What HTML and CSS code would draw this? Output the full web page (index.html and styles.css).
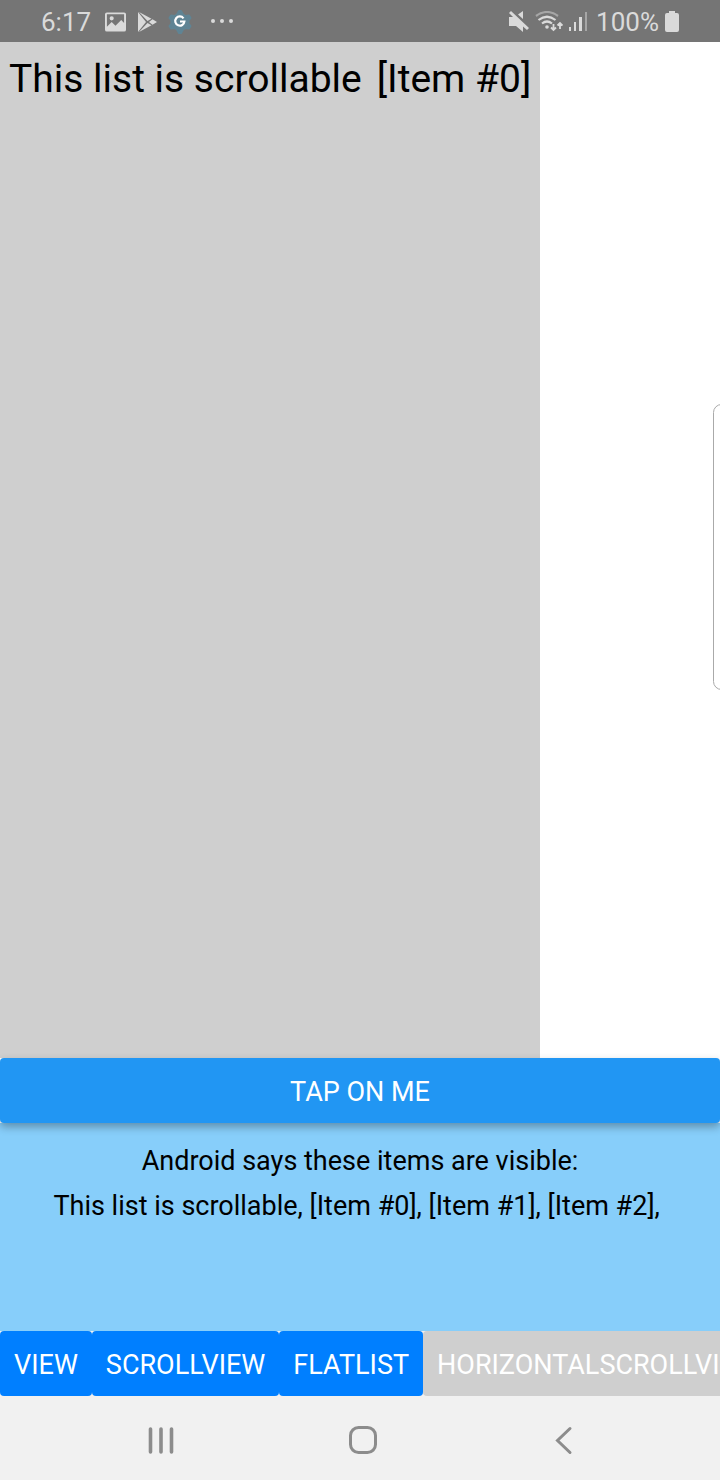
FILE: index.html
```html
<!DOCTYPE html>
<html lang="en">
<head>
<meta charset="utf-8">
<meta name="viewport" content="width=device-width, initial-scale=1">
<title>Scrollable list</title>
<link rel="stylesheet" href="styles.css">
</head>
<body>
<div class="screen">
  <header class="status">
    <div class="status-left">
      <span class="clock">6:17</span>
      <svg class="icon" width="21" height="20" viewBox="0 0 22 20"><path fill-rule="evenodd" fill="#dadada" d="M2 0h18q2 0 2 2v16q0 2-2 2H2q-2 0-2-2V2Q0 0 2 0zM2 2v13l5-5 4 4 6-6 3 3V2zM7 4a2.200 2.200 0 1 1 0 4.400a2.200 2.200 0 1 1 0-4.400z"/></svg>
      <svg class="icon" width="20" height="20" viewBox="0 0 20 20"><path fill="#dadada" d="M1 0v20L9 10zM2 0L14.500 6.800 10.500 9zM2 20L14.500 13.200 10.500 11zM15.500 7.200l4.500 2.800-4.500 2.800L12 10z"/></svg>
      <svg class="icon" width="24" height="26" viewBox="0 0 24 26"><path fill="#5f8494" stroke="#5f8494" stroke-width="2" stroke-linejoin="round" d="M11 2h2l2 3.500 2.500 1.500 3.500-.5 1.500 2.500-2 2.500v3l2 2.500-1.500 2.500-3.500-.5-2.500 1.500-2 3.500h-2l-2-3.500-2.500-1.500-3.500.5-1.500-2.500 2-2.500v-3l-2-2.500 1.500-2.500 3.500.5 2.500-1.500z"/><path fill="none" stroke="#fff" stroke-width="2.200" d="M15.500 9.300A4.600 4.600 0 1 0 16.400 12.500H12"/></svg>
      <svg class="icon dots" width="24" height="20" viewBox="0 0 24 20"><g fill="#dadada"><circle cx="3" cy="9" r="2"/><circle cx="12" cy="9" r="2"/><circle cx="21" cy="9" r="2"/></g></svg>
    </div>
    <div class="status-right">
      <svg class="icon" width="20" height="22" viewBox="0 0 20 22"><path fill="#dadada" d="M2 0L20 17 18 19 14 15.500V21L7 15H0V6h4L0 2zM14 0v8L9 3.500z"/></svg>
      <svg class="icon" width="28" height="22" viewBox="0 0 28 22"><g fill="none" stroke="#dadada" stroke-width="2.200"><path stroke="#a6a6a6" d="M1 5q11-8 22 0"/><path d="M3.500 9q8.500-6.500 17 0M7 12.500q5-4 10 0"/></g><circle cx="12" cy="16" r="1.800" fill="#dadada"/><path fill="none" stroke="#dadada" stroke-width="1.800" d="M18.500 13v6M16 16.500l2.500 2.500 2.500-2.500M25 18v-6M22.500 14.500L25 12l2.500 2.500"/></svg>
      <svg class="icon" width="19" height="22" viewBox="0 0 19 22"><g fill="#dadada"><path d="M0 16h2v4H0zM5 11h2v9H5zM10 6h3v14h-3z"/><path fill="#a6a6a6" d="M16 1h2v19h-2z"/></g></svg>
      <span class="battery-text">100%</span>
      <svg class="icon" width="14" height="22" viewBox="0 0 14 22"><path fill="#dadada" d="M4 0h6v2h2q2 0 2 2v15q0 2-2 2H2q-2 0-2-2V4q0-2 2-2h2z"/></svg>
    </div>
  </header>

  <main class="list">
    <div class="list-item"><span>This list is scrollable</span><span>[Item #0]</span></div>
  </main>

  <button class="tap" type="button">TAP ON ME</button>

  <section class="info">
    <p class="line">Android says these items are visible:</p>
    <p class="line">This list is scrollable, [Item #0], [Item #1], [Item #2],&nbsp;</p>
  </section>

  <div class="tabs">
    <button class="tab" type="button">VIEW</button>
    <button class="tab" type="button">SCROLLVIEW</button>
    <button class="tab" type="button">FLATLIST</button>
    <button class="tab current" type="button">HORIZONTALSCROLLVIEW</button>
  </div>

  <nav class="nav">
    <button class="nav-button" type="button" aria-label="Recent apps"><svg width="30" height="30" viewBox="0 0 30 30"><path fill="none" stroke="#8c8c8c" stroke-width="3.600" stroke-linecap="round" d="M4.500 4v23M15 4v23M25.500 4v23"/></svg></button>
    <button class="nav-button" type="button" aria-label="Home"><svg width="30" height="30" viewBox="0 0 30 30"><rect x="2.500" y="2.500" width="25" height="25" rx="8" fill="none" stroke="#8c8c8c" stroke-width="3"/></svg></button>
    <button class="nav-button" type="button" aria-label="Back"><svg width="30" height="30" viewBox="0 0 30 30"><path fill="none" stroke="#8c8c8c" stroke-width="3" stroke-linecap="round" d="M21 3.500L8.500 15.500 21 27.500"/></svg></button>
  </nav>
  <div class="edge-handle"></div>
</div>
</body>
</html>
```
FILE: styles.css
```css
* { box-sizing: border-box; }
body {
  margin: 0;
  font-family: Roboto, sans-serif;
  color: #000;
  background: #fff;
}
button {
  border: 0;
  font: inherit;
  cursor: pointer;
}
svg { display: block; flex: none; }
.screen {
  position: relative;
  display: flex;
  flex-direction: column;
  min-height: 100vh;
  overflow: hidden;
}
.status {
  display: flex;
  justify-content: space-between;
  align-items: center;
  height: 42px;
  padding: 1px 41px 0;
  background: #757575;
  color: #dadada;
  font-size: 26px;
}
.status-left, .status-right {
  display: flex;
  align-items: center;
}
.status-left { gap: 11px; }
.status-right { gap: 6px; }
.clock, .battery-text { padding-top: 1px; }
.clock { margin-right: 3px; }
.battery-text { margin-left: 2px; }
.dots { margin-left: 7px; }
.list {
  display: flex;
  flex: 1;
  background: #fff;
}
.list-item {
  display: flex;
  gap: 15px;
  width: 75%;
  padding: 11px 9px;
  background: #cfcfcf;
  font-size: 39px;
  line-height: 52px;
  white-space: nowrap;
}
.tap {
  position: relative;
  height: 65px;
  padding-top: 4px;
  border-radius: 4px;
  background: #2196f3;
  box-shadow: 0 4px 8px rgba(0, 0, 0, 0.3);
  color: #fff;
  font-size: 27px;
}
.info {
  height: 208px;
  padding-top: 16px;
  background: #87cefa;
  font-size: 27px;
  line-height: 45px;
  text-align: center;
}
.line { margin: 0; }
.tabs {
  display: flex;
  overflow: hidden;
  background: #f1f1f1;
}
.tab {
  flex: none;
  height: 65px;
  padding: 3px 14px 0;
  border-radius: 4px;
  background: #007fff;
  color: #fff;
  font-size: 27px;
}
.current { background: #cfcfcf; }
.nav {
  display: flex;
  justify-content: center;
  align-items: center;
  gap: 24%;
  height: 84px;
  padding: 4px 0 0 5px;
  background: #f1f1f1;
}
.nav-button {
  flex: none;
  padding: 0;
  background: none;
}
.edge-handle {
  position: absolute;
  top: 404px;
  right: -10px;
  width: 17px;
  height: 286px;
  border: 1px solid #aaa;
  border-radius: 9px;
  background: #fff;
}
```
